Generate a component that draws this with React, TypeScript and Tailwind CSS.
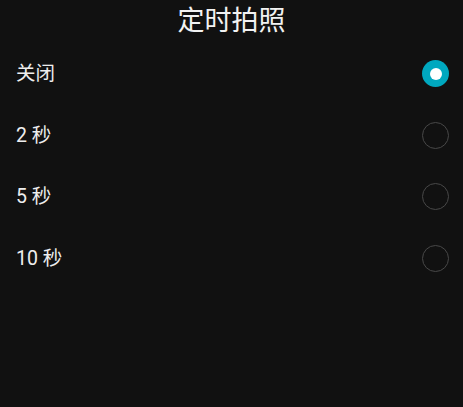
import { useState } from 'react';

const options = ['关闭', '2 秒', '5 秒', '10 秒'];

export default function App() {
    const [selected, setSelected] = useState(0);

    return (
        <div
            className="w-[463px] h-[407px] bg-[#111111] text-white overflow-hidden"
            style={{ fontFamily: 'Roboto, "Noto Sans CJK SC", sans-serif' }}
        >
            <h1 className="h-[42px] flex items-center justify-center text-[27px] leading-none text-[#f2f2f2]">
                定时拍照
            </h1>

            <div className="flex flex-col pt-[1px]">
                {options.map((label, i) => (
                    <button
                        key={label}
                        onClick={() => setSelected(i)}
                        className="h-[61.5px] flex items-center justify-between pl-4 pr-[14px] text-left"
                    >
                        <span className="text-[19.5px] text-[#eeeeee]">{label}</span>
                        {selected === i ? (
                            <span className="w-[27px] h-[27px] rounded-full bg-[#00a8bf] flex items-center justify-center">
                                <span className="w-[12px] h-[12px] rounded-full bg-white" />
                            </span>
                        ) : (
                            <span className="w-[27px] h-[27px] rounded-full border-[1.5px] border-[#484848]" />
                        )}
                    </button>
                ))}
            </div>
        </div>
    );
}
